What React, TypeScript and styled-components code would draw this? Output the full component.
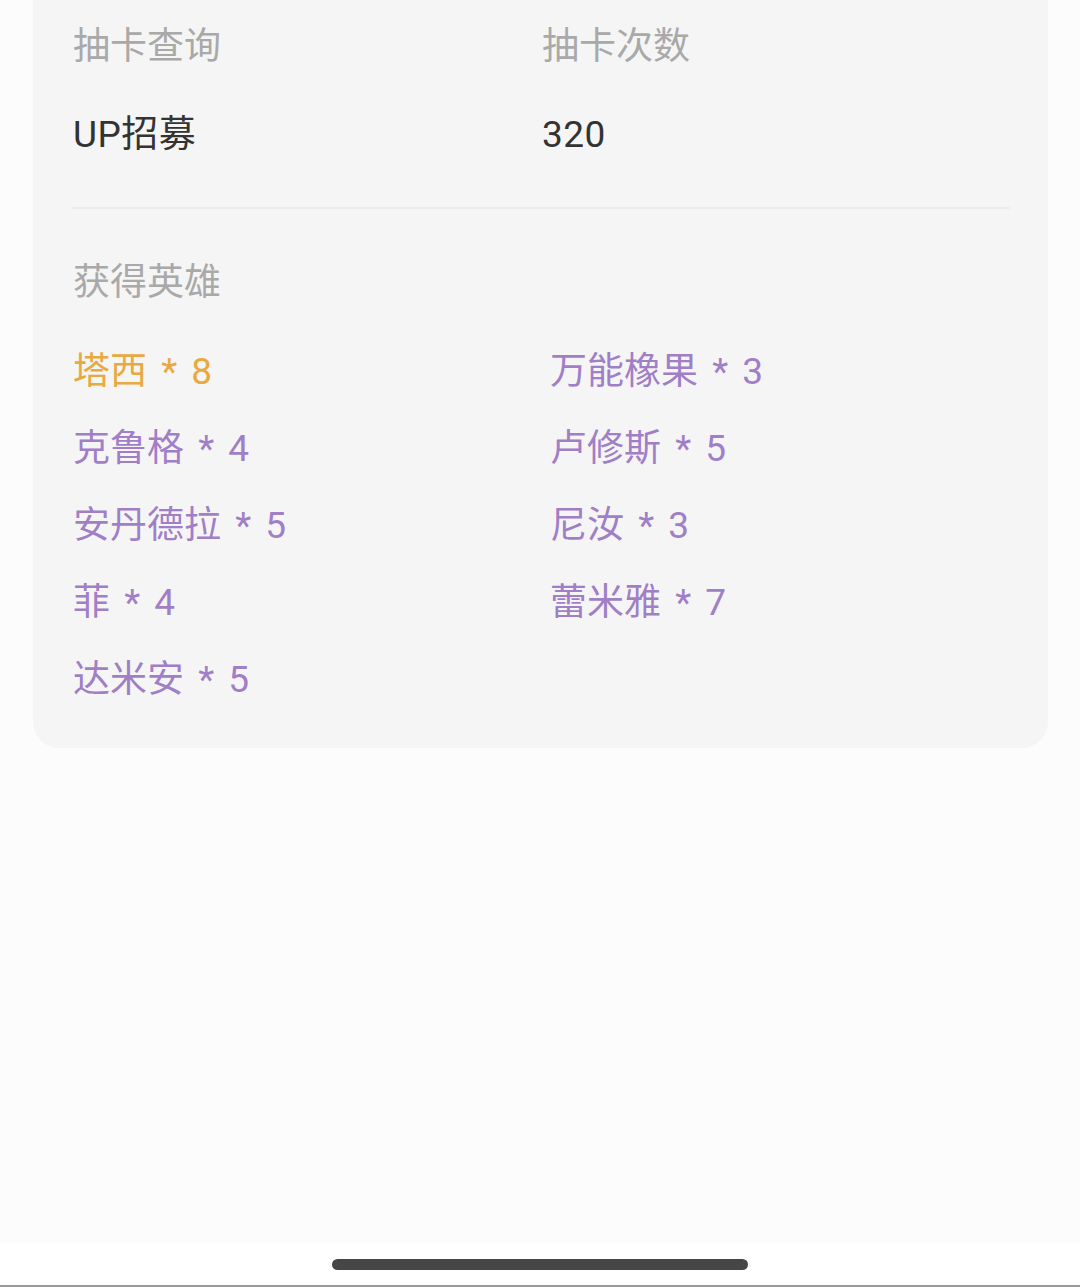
import React from "react";
import styled, { createGlobalStyle } from "styled-components";

const Global = createGlobalStyle`
  html, body { margin: 0; padding: 0; background: #fcfcfc; }
  body { font-family: Roboto, "Noto Sans CJK SC", sans-serif; }
  * { box-sizing: border-box; }
`;

const Screen = styled.div`
  width: 1080px;
  height: 1287px;
  display: flex;
  flex-direction: column;
  background: #fcfcfc;
  overflow: hidden;
`;

const Content = styled.div`
  flex: 1;
  padding: 0 32px 0 33px;
`;

const Card = styled.section`
  background: #f5f5f5;
  border-radius: 0 0 26px 26px;
  padding: 22px 38px 30px 40px;
`;

const InfoGrid = styled.div`
  display: grid;
  grid-template-columns: 469px 1fr;
  row-gap: 38px;
`;

const Label = styled.div`
  font-size: 37px;
  line-height: 50px;
  color: #a9a9a9;
`;

const Value = styled.div`
  font-size: 37px;
  line-height: 50px;
  color: #333333;
  letter-spacing: 0.5px;
`;

const Divider = styled.hr`
  border: none;
  height: 2px;
  background: #ececec;
  margin: 47px 0 49px -1px;
`;

const SectionTitle = styled.div`
  font-size: 37px;
  line-height: 50px;
  color: #a9a9a9;
  margin-bottom: 25px;
`;

const HeroGrid = styled.div`
  display: grid;
  grid-template-columns: 477px 1fr;
  grid-auto-rows: 77px;
`;

const Hero = styled.div<{ $tone: "gold" | "purple" }>`
  font-size: 37px;
  line-height: 77px;
  word-spacing: 5px;
  color: ${(p) => (p.$tone === "gold" ? "#e8a940" : "#a07fc7")};
  white-space: pre;
`;

const NavBar = styled.div`
  height: 45px;
  background: #ffffff;
  display: flex;
  align-items: center;
  justify-content: center;
  border-bottom: 2px solid #999999;
`;

const HomeIndicator = styled.div`
  width: 416px;
  height: 11px;
  border-radius: 6px;
  background: #464646;
  margin-top: 2px;
`;

const heroes: { name: string; count: number; tone: "gold" | "purple" }[] = [
  { name: "塔西", count: 8, tone: "gold" },
  { name: "万能橡果", count: 3, tone: "purple" },
  { name: "克鲁格", count: 4, tone: "purple" },
  { name: "卢修斯", count: 5, tone: "purple" },
  { name: "安丹德拉", count: 5, tone: "purple" },
  { name: "尼汝", count: 3, tone: "purple" },
  { name: "菲", count: 4, tone: "purple" },
  { name: "蕾米雅", count: 7, tone: "purple" },
  { name: "达米安", count: 5, tone: "purple" },
];

export default function App() {
  return (
    <>
      <Global />
      <Screen>
        <Content>
          <Card>
            <InfoGrid>
              <Label>抽卡查询</Label>
              <Label>抽卡次数</Label>
              <Value>UP招募</Value>
              <Value>320</Value>
            </InfoGrid>
            <Divider />
            <SectionTitle>获得英雄</SectionTitle>
            <HeroGrid>
              {heroes.map((h) => (
                <Hero key={h.name} $tone={h.tone}>
                  {`${h.name} * ${h.count}`}
                </Hero>
              ))}
            </HeroGrid>
          </Card>
        </Content>
        <NavBar>
          <HomeIndicator />
        </NavBar>
      </Screen>
    </>
  );
}
